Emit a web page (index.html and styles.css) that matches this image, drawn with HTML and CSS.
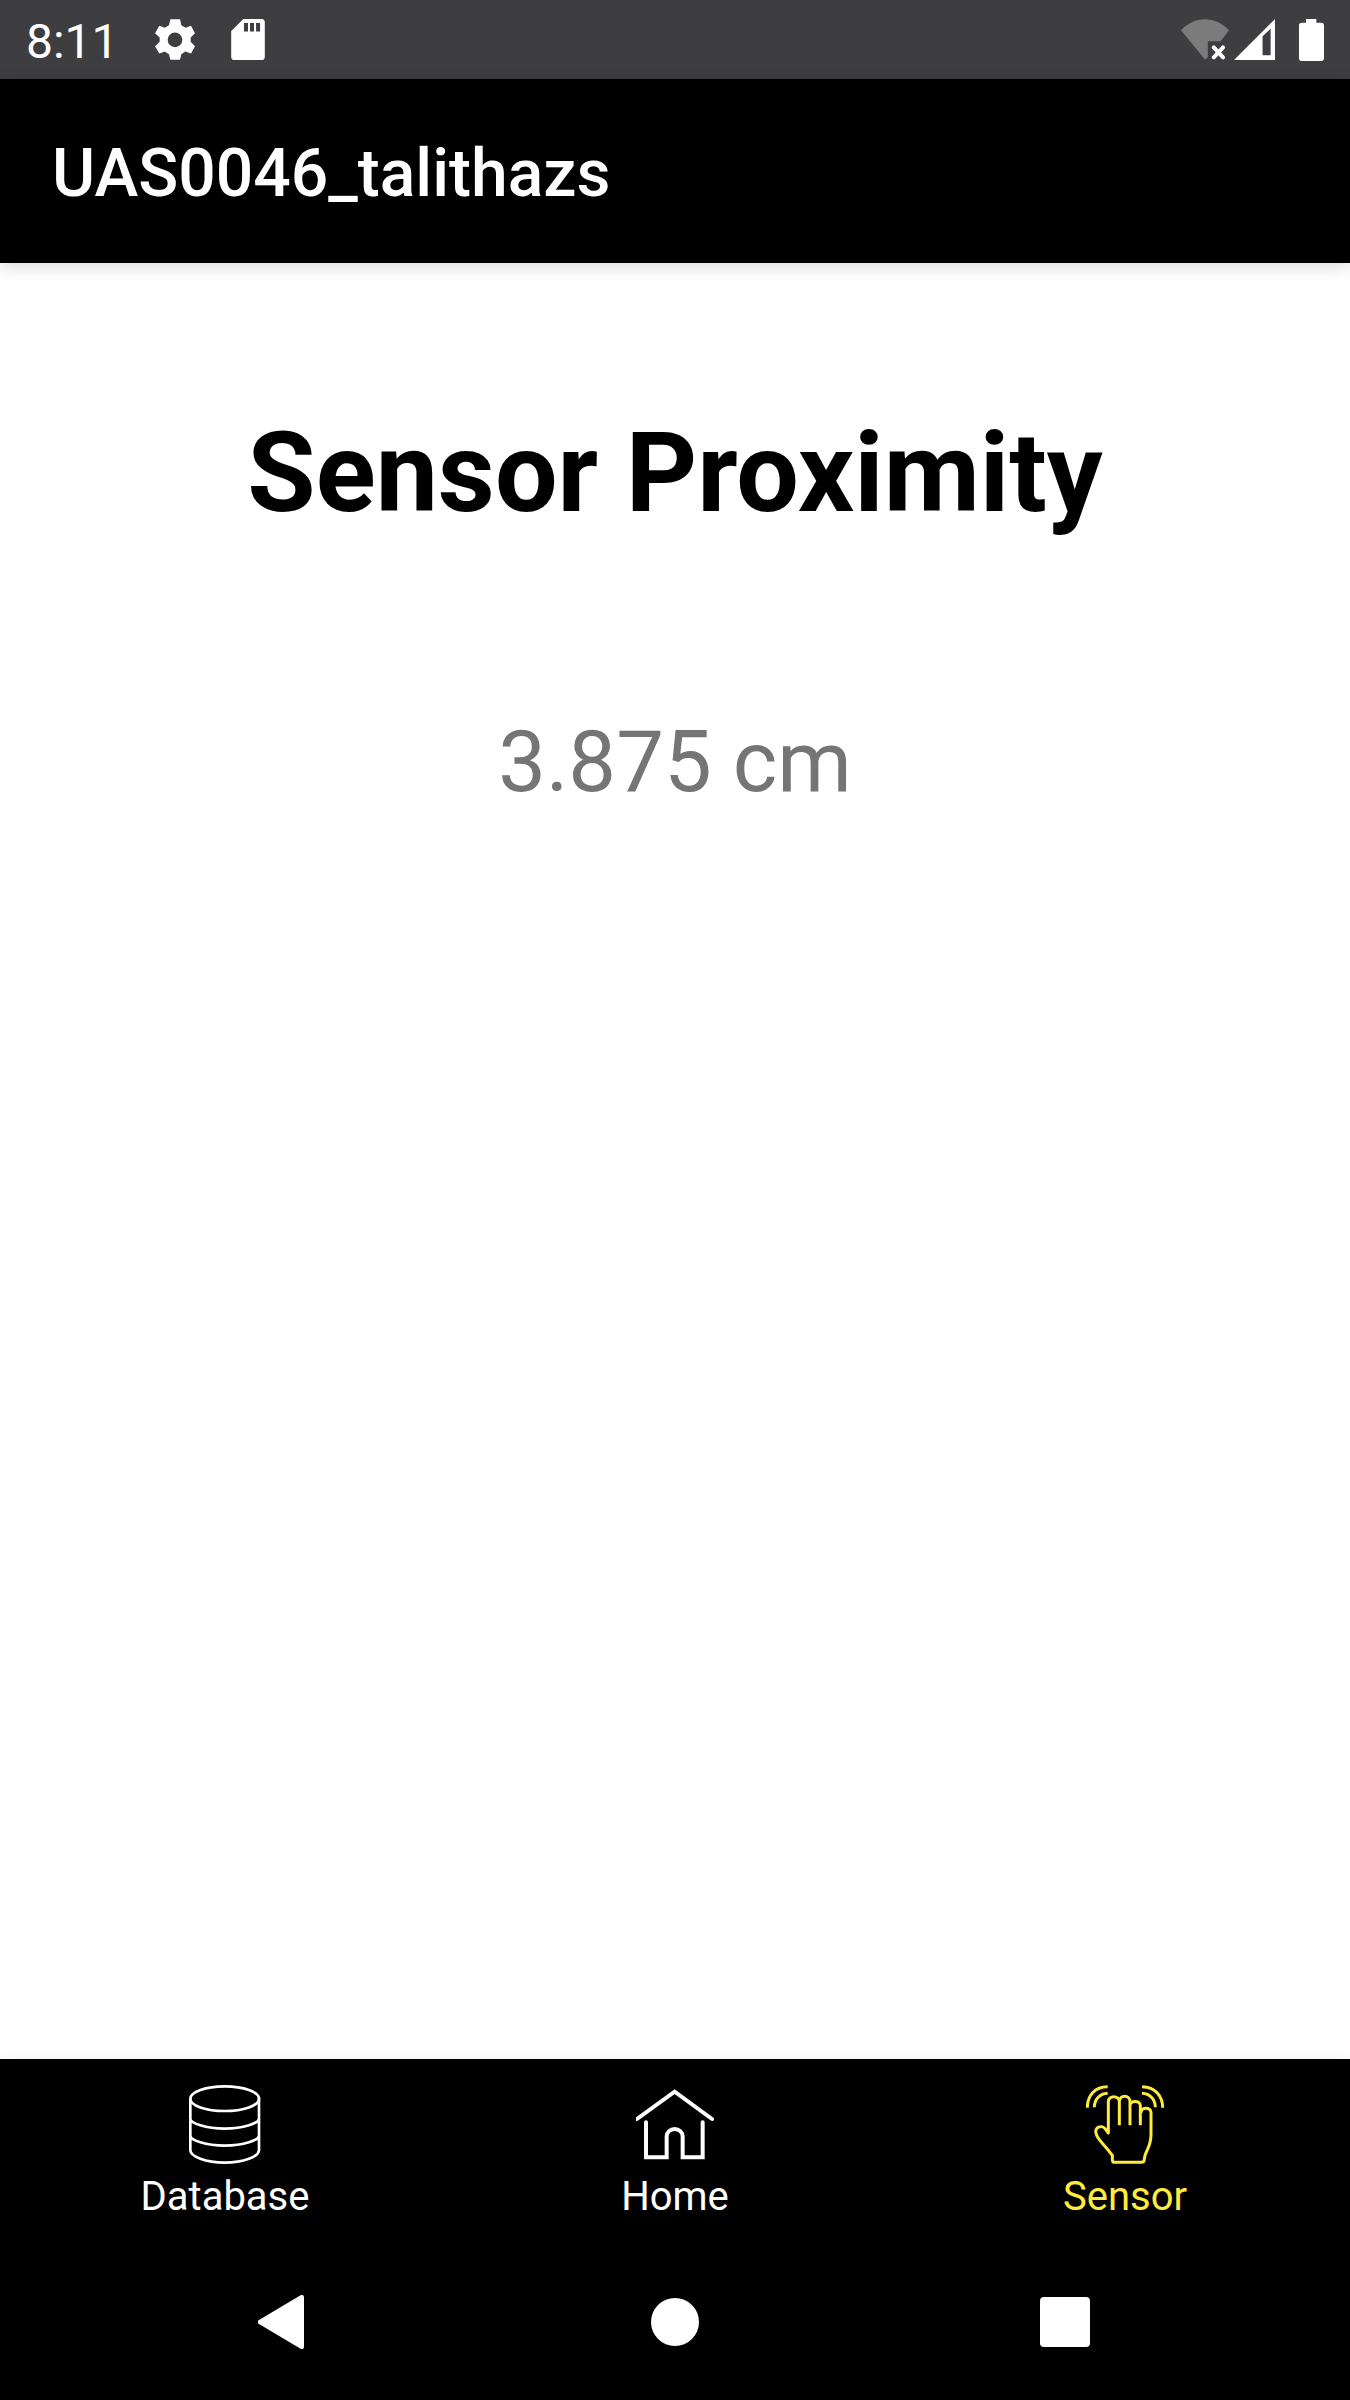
FILE: index.html
```html
<!DOCTYPE html>
<html lang="en">
<head>
<meta charset="utf-8">
<meta name="viewport" content="width=device-width, initial-scale=1">
<title>UAS0046_talithazs</title>
<link rel="stylesheet" href="styles.css">
</head>
<body>
<div class="status-bar">
  <div class="status-group status-left">
    <span class="clock">8:11</span>
    <svg class="status-icon gear" viewBox="0 0 120 122" aria-hidden="true"><path fill-rule="evenodd" d="M46 0h29l4 18 13 8 16-6 12 22-13 13v13l13 13-12 22-17-6-12 8-4 17H46l-4-17-13-8-16 6L0 81l14-13V55L0 42l13-22 16 6 13-8zM60 40a22 22 0 1 0 0 44 22 22 0 0 0 0-44z"/></svg>
    <svg class="status-icon card" viewBox="0 0 100 122" aria-hidden="true"><path fill-rule="evenodd" d="M36 0h54q10 0 10 10v102q0 10-10 10H10q-10 0-10-10V36zM38 12v25h12V12zM56 12v25h12V12zM74 12v25h12V12z"/></svg>
  </div>
  <div class="status-group status-right">
    <svg class="status-icon wifi" viewBox="0 0 145 122" aria-hidden="true"><path class="dim" d="M0 33C42-11 103-11 145 33L120 66H81v48l-8 8z"/><path class="cross" d="M99 85l28 30M127 85l-28 30"/></svg>
    <svg class="status-icon signal" viewBox="0 0 122 122" aria-hidden="true"><path fill-rule="evenodd" d="M122 0v122H0zM85 51v57h24V29z"/></svg>
    <svg class="status-icon battery" viewBox="0 0 75 126" aria-hidden="true"><path d="M21 0h31v11h15q8 0 8 8v99q0 8-8 8H8q-8 0-8-8V19q0-8 8-8h13z"/></svg>
  </div>
</div>
<header class="app-bar"><span class="app-title">UAS0046_talithazs</span></header>
<main class="content">
  <h1 class="heading">Sensor Proximity</h1>
  <p class="reading">3.875 cm</p>
</main>
<nav class="tabs">
  <a class="tab" href="#database">
    <svg class="tab-icon" viewBox="2 0 237 237" aria-hidden="true"><g stroke-width="8"><ellipse cx="118" cy="41" rx="103" ry="37"/><path d="M15 40v156c0 18 46 37 103 37s103-19 103-37V40M15 101c0 13 46 30 103 30s103-17 103-30M15 152c0 13 46 30 103 30s103-17 103-30"/></g></svg>
    <span>Database</span>
  </a>
  <a class="tab" href="#home">
    <svg class="tab-icon" viewBox="2 0 237 237" aria-hidden="true"><g stroke-width="12" stroke-linecap="round"><path d="M5 102L118 20l112 82"/><path d="M32 112v105h62v-63a24 22 0 0 1 48 0v63h60V112"/></g></svg>
    <span>Home</span>
  </a>
  <a class="tab active" href="#sensor" aria-current="page">
    <svg class="tab-icon" viewBox="2 0 237 237" aria-hidden="true"><g stroke-width="9" stroke-linejoin="round"><path d="M6 68C6 32 28 5 67 5M27 67c0-24 16-41 40-42M170 5c40 1 62 28 62 63M170 25c24 1 40 18 40 42M102 121V50c0-20-33-20-33 0v94l-8-11c-10-16-37-6-28 14 2 15 20 26 48 64v13q0 8 8 8h78q10 0 10-9c0-22 20-35 20-74V83c0-18-30-18-30 0M102 50c0-22 32-22 32 0v71M134 62c0-17 31-17 31 0v59"/></g></svg>
    <span>Sensor</span>
  </a>
</nav>
<div class="system-nav">
  <button class="system-button" aria-label="Back"><svg class="system-icon" viewBox="0 0 54 54" aria-hidden="true"><path d="M43 0q3-1 3 3v48q0 4-3 3L1 29q-3-2 0-4z"/></svg></button>
  <button class="system-button" aria-label="Home"><svg class="system-icon" viewBox="0 0 54 54" aria-hidden="true"><circle cx="27" cy="27" r="24"/></svg></button>
  <button class="system-button" aria-label="Overview"><svg class="system-icon" viewBox="0 0 54 54" aria-hidden="true"><rect x="2" y="2" width="50" height="50" rx="4"/></svg></button>
</div>
</body>
</html>
```
FILE: styles.css
```css
* { box-sizing: border-box; }

body {
  margin: 0;
  min-height: 100vh;
  display: flex;
  flex-direction: column;
  background: #fff;
  color: #fff;
  font-family: Roboto, "Noto Sans", sans-serif;
}

.status-bar {
  display: flex;
  justify-content: space-between;
  align-items: center;
  height: 79px;
  padding: 0 26px;
  background: #3e3e40;
}

.status-group { display: flex; align-items: center; }
.status-right { gap: 5px; }
.clock { font-size: 48px; line-height: 56px; margin-right: 36px; padding-top: 4px; }
.status-icon { display: block; fill: #fff; height: 41px; }
.gear { width: 40px; margin-right: 36px; }
.card { width: 34px; }
.wifi { width: 48px; }
.signal { width: 41px; }
.battery { width: 25px; height: 42px; margin-left: 19px; }
.dim { fill: #7b7b7c; }
.cross { fill: none; stroke: #fff; stroke-width: 12; stroke-linecap: round; }

.app-bar {
  display: flex;
  align-items: center;
  height: 184px;
  padding: 6px 52px 0;
  background: #000;
  box-shadow: 0 4px 16px rgba(0, 0, 0, 0.14);
}

.app-title { font-size: 66px; line-height: 78px; font-weight: 500; }

.content {
  flex: 1;
  padding: 144px 24px;
  text-align: center;
}

.heading { margin: 0; font-size: 111px; line-height: 132px; font-weight: 700; color: #000; }
.reading { margin: 173px 0 0; font-size: 85px; line-height: 100px; color: #757575; }

.tabs {
  display: grid;
  grid-template-columns: repeat(3, 1fr);
  height: 184px;
  background: #000;
  box-shadow: 0 0 12px rgba(0, 0, 0, 0.06);
}

.tab {
  display: flex;
  flex-direction: column;
  align-items: center;
  gap: 10px;
  padding-top: 26px;
  color: #fff;
  font-size: 40px;
  line-height: 46px;
  text-decoration: none;
}

.active { color: #ffeb3b; }
.tab-icon { display: block; width: 79px; height: 79px; fill: none; stroke: currentColor; }

.system-nav {
  display: grid;
  grid-template-columns: repeat(3, 1fr);
  height: 157px;
  padding: 0 90px;
  background: #000;
}

.system-button {
  display: flex;
  justify-content: center;
  align-items: center;
  padding: 0;
  border: 0;
  background: none;
}

.system-icon { display: block; width: 54px; height: 54px; fill: #fff; }
```
